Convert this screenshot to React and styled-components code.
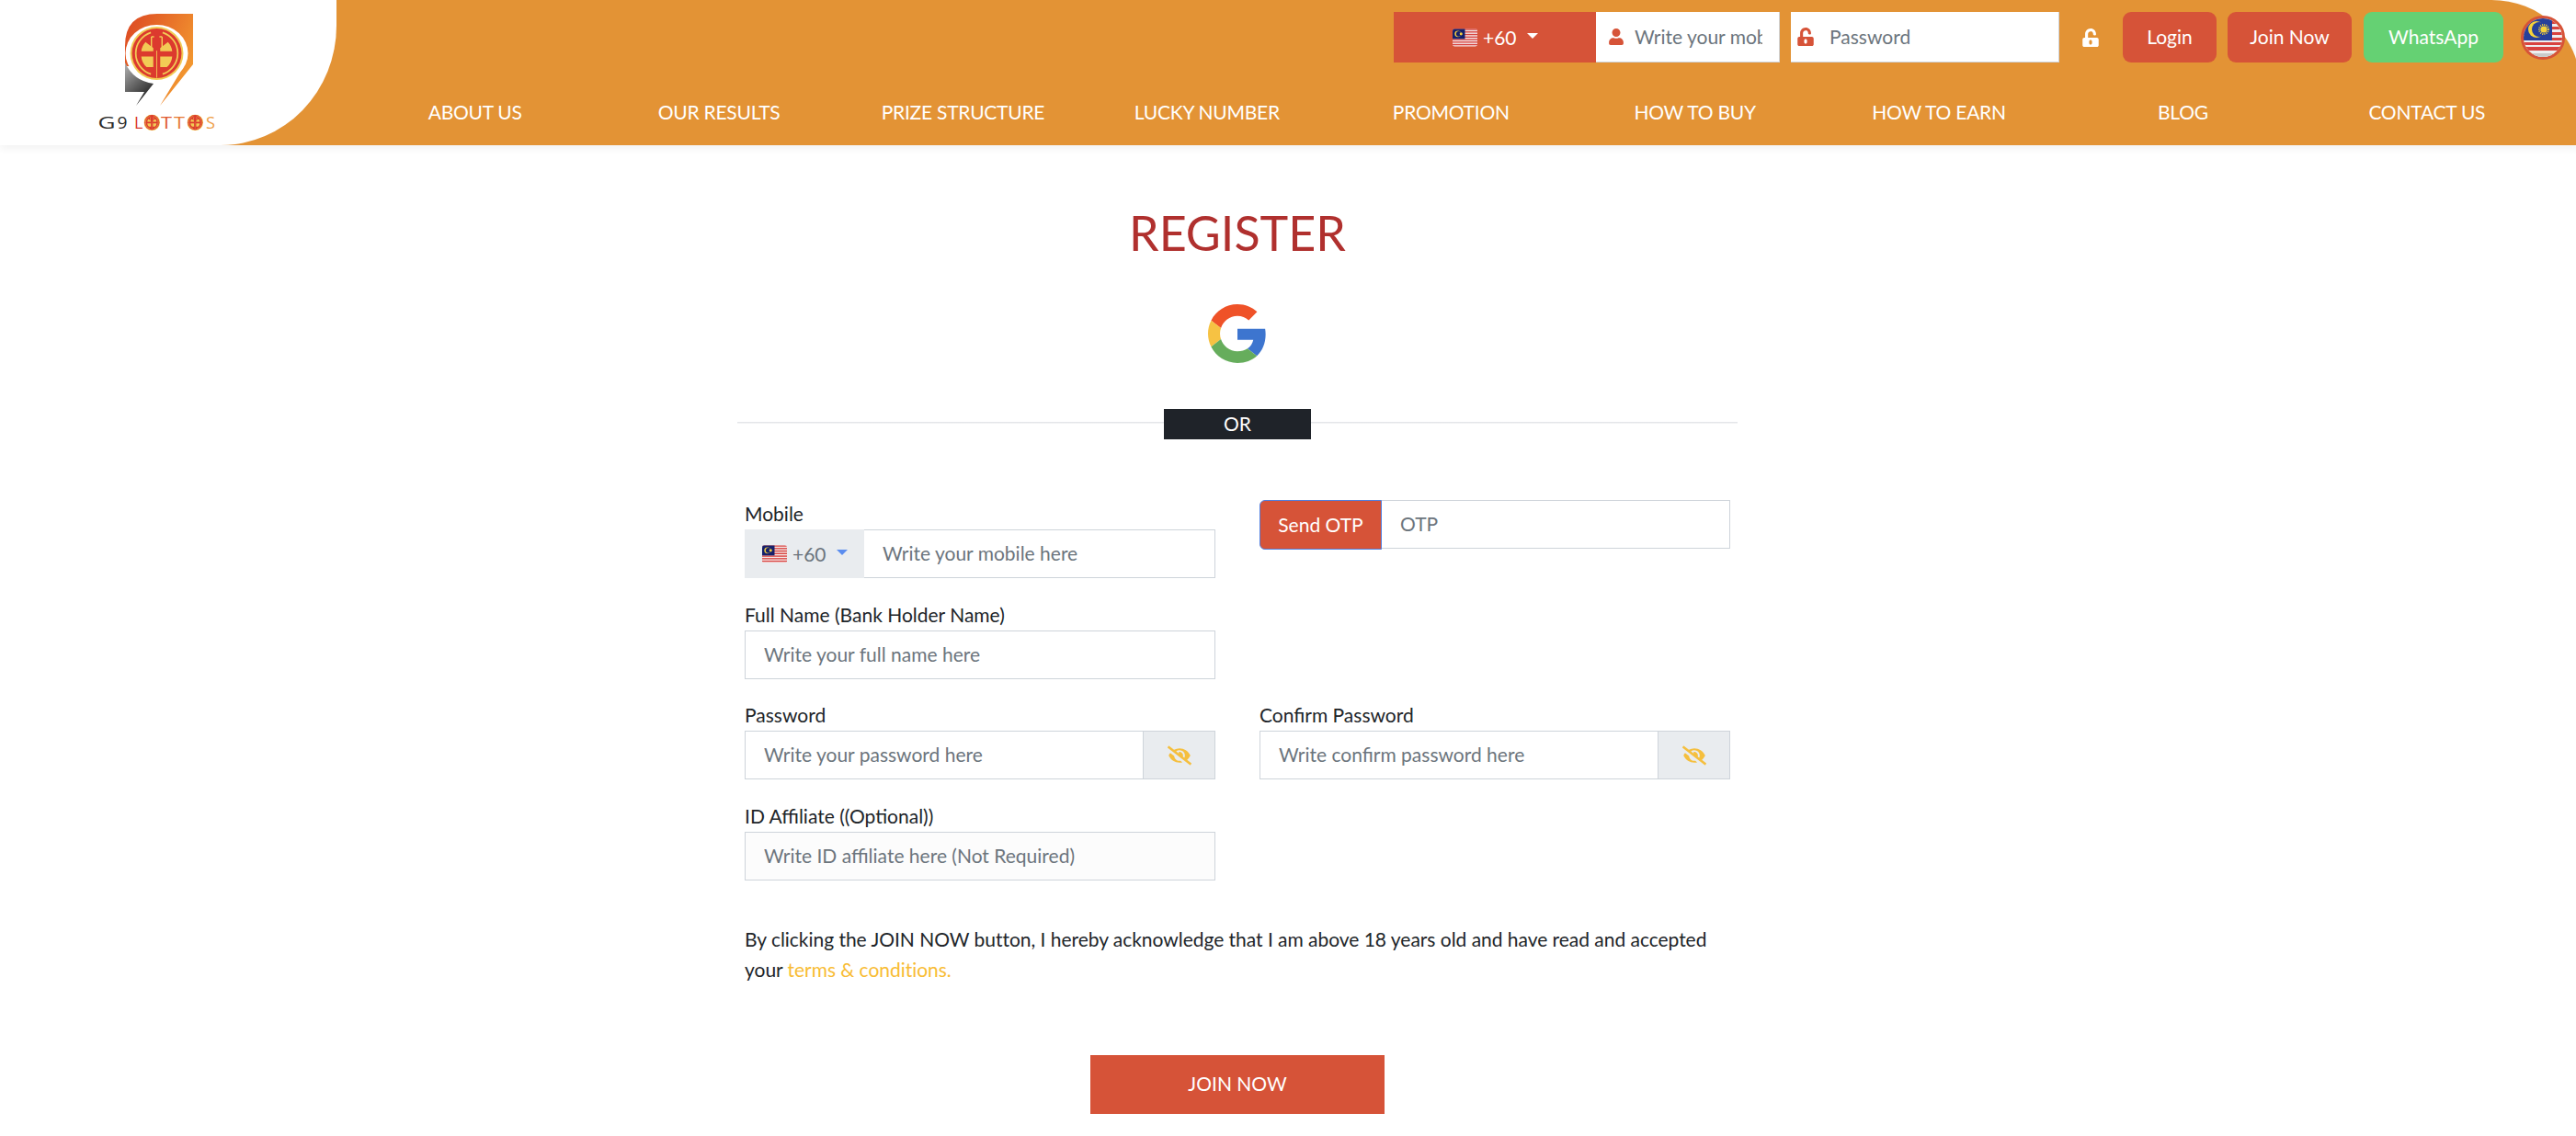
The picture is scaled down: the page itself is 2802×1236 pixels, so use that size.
import React from 'react';
import styled, { createGlobalStyle } from 'styled-components';
import { FaUser, FaUnlockAlt, FaEyeSlash } from 'react-icons/fa';

const FONT = '"Lato", "Noto Sans", "Liberation Sans", sans-serif';

const Global = createGlobalStyle`
  html, body { margin: 0; padding: 0; background: #fff; }
  body { font-family: ${FONT}; color: #212529; overflow: hidden; }
  * { box-sizing: border-box; }
  input::placeholder { color: #6c757d; opacity: 1; }
`;

const Page = styled.div`width: 2802px; height: 1236px; overflow: hidden; background: #fff;`;

const Header = styled.header`
  display: flex;
  width: 2806px;
  height: 158px;
  background: #e39335;
  border-top-right-radius: 96px 90px;
  box-shadow: 0 4px 8px rgba(0,0,0,.05);
`;
const LogoBlock = styled.div`
  width: 366px;
  height: 158px;
  flex: none;
  background: #fff;
  border-bottom-right-radius: 126px 130px;
`;
const HeaderBody = styled.div`flex: 1; display: flex; flex-direction: column; padding-top: 13px;`;
const TopRow = styled.div`
  display: flex;
  align-items: center;
  justify-content: flex-end;
  height: 55px;
  padding-right: 16px;
`;
const PhoneSelect = styled.div`
  width: 220px;
  height: 55px;
  background: #d65338;
  color: #fff;
  font-size: 21px;
  display: flex;
  align-items: center;
  padding-left: 64px;
`;
const Caret = styled.span`
  width: 0; height: 0;
  border-left: 6px solid transparent;
  border-right: 6px solid transparent;
  border-top: 6px solid ${p => p.$color};
  margin-left: ${p => p.$gap}px;
  margin-top: -3px;
`;
const HeadInputWrap = styled.div`
  width: ${p => p.$w}px;
  height: 55px;
  background: #fff;
  border-bottom: 1px solid #ced4da;
  border-right: 1px solid #ced4da;
  display: flex;
  align-items: center;
  margin-right: ${p => p.$mr || 0}px;
  padding-left: ${p => p.$pl}px;
  padding-right: 18px;
  color: #d65338;
  font-size: 20px;
`;
const HeadInput = styled.input`
  flex: 1;
  min-width: 0;
  border: 0;
  outline: 0;
  padding: 0 0 2px;
  margin-left: ${p => p.$ml}px;
  font: 400 21px ${FONT};
  background: transparent;
`;
const UnlockSlot = styled.div`
  color: #fff;
  font-size: 20px;
  display: flex;
  margin-right: 25px;
`;
const HeadButton = styled.button`
  width: ${p => p.$w}px;
  height: 55px;
  margin-right: ${p => p.$mr}px;
  border: 0;
  border-radius: 9px;
  background: ${p => p.$bg};
  color: #fff;
  font: 400 21px ${FONT};
  padding: 0 0 2px;
`;
const RoundFlag = styled.div`
  width: 48px; height: 48px;
  border-radius: 50%;
  border: 3px solid #d65338;
  overflow: hidden;
  flex: none;
  display: flex;
`;
const Nav = styled.nav`
  display: grid;
  grid-template-columns: repeat(9, 265.4px);
  margin-left: 18px;
  margin-top: 40px;
`;
const NavItem = styled.a`
  text-align: center;
  color: #fff;
  font-size: 21px;
  line-height: 27px;
  letter-spacing: -.25px;
`;

const Main = styled.main`
  width: 1088px;
  margin-left: 802px;
  display: flex;
  flex-direction: column;
  align-items: center;
`;
const Title = styled.h1`
  margin: 65px 0 0;
  height: 60px;
  line-height: 60px;
  font-size: 52px;
  font-weight: 400;
  color: #b0302e;
`;
const GoogleBtn = styled.div`margin-top: 48px; height: 64px; display: flex;`;
const Divider = styled.div`
  width: 100%;
  margin-top: 50px;
  height: 33px;
  display: flex;
  justify-content: center;
  background: linear-gradient(#e4e6e9, #e4e6e9) 0 14px / 100% 1.5px no-repeat;
`;
const OrBox = styled.div`
  width: 160px;
  height: 33px;
  background: #1f2329;
  color: #fff;
  font-size: 21px;
  line-height: 31px;
  text-align: center;
`;
const Form = styled.form`
  margin-top: 66px;
  width: 1072px;
  display: grid;
  grid-template-columns: 512px 512px;
  column-gap: 48px;
  row-gap: 24.67px;
`;
const Field = styled.div`display: flex; flex-direction: column;`;
const Label = styled.label`
  height: 32px;
  line-height: 30px;
  font-size: 21px;
`;
const Group = styled.div`
  display: flex;
  height: 53px;
`;
const TextInput = styled.input`
  flex: 1;
  min-width: 0;
  height: 53px;
  border: 1.5px solid #ced4da;
  border-left-width: ${p => p.$noLeft ? 0 : 1.5}px;
  padding: 0 ${p => p.$px || 20}px 2px;
  font: 400 21px ${FONT};
  background: ${p => p.$bg || '#fff'};
  outline: 0;
`;
const CountrySelect = styled.div`
  width: 130px;
  flex: none;
  background: #e9ecef;
  border: 0;
  display: flex;
  align-items: center;
  padding-left: 19px;
  font-size: 21px;
  color: #6c757d;
`;
const FlagSlot = styled.span`display: flex; margin-right: ${p => p.$mr}px;`;
const EyeAddon = styled.div`
  width: 79px;
  flex: none;
  background: #e9ecef;
  border: 1.5px solid #ced4da;
  color: #f5bf3e;
  font-size: 26px;
  display: flex;
  align-items: center;
  justify-content: center;
  margin-left: -1.5px;
`;
const OtpGroup = styled.div`display: flex; align-items: flex-start; height: 54px;`;
const OtpButton = styled.button`
  width: 133px;
  height: 54px;
  flex: none;
  background: #d65338;
  border: 1.5px solid #4f7fe0;
  border-radius: 6px 0 0 6px;
  color: #fff;
  font: 400 21px ${FONT};
  padding: 0 0 2px;
`;
const Agreement = styled.p`
  width: 1072px;
  margin: 47px 0 0;
  font-size: 21px;
  line-height: 33.5px;
  letter-spacing: -.03px;
`;
const TermsLink = styled.a`color: #f8bc34;`;
const JoinButton = styled.button`
  margin-top: 76px;
  width: 320px;
  height: 64px;
  flex: none;
  border: 0;
  background: #d65338;
  color: #fff;
  font: 400 21px ${FONT};
  padding: 0 0 2px;
`;

const Flag = ({ w = 27, h = 20 }) => {
  const stripes = [];
  for (let i = 0; i < 7; i++) stripes.push(<rect key={i} x="0" y={i * 2.86} width="28" height="1.43" fill="#d8433f" />);
  return (
    <svg width={w} height={h} viewBox="0 0 28 20">
      <defs><clipPath id="fl"><rect width="28" height="20" rx="2.5" /></clipPath></defs>
      <g clipPath="url(#fl)">
        <rect width="28" height="20" fill="#f4e9e9" />
        {stripes}
        <rect width="14" height="11.4" fill="#15206b" />
        <circle cx="6" cy="5.7" r="3.6" fill="#f6cf3f" />
        <circle cx="7" cy="5.7" r="3" fill="#15206b" />
        <circle cx="9.6" cy="5.7" r="1.6" fill="#f6cf3f" />
      </g>
    </svg>
  );
};

const BigRoundFlag = () => (
  <svg width="42" height="42" viewBox="0 0 42 42">
    <rect width="42" height="42" fill="#eeeeee" />
    {[3, 9, 15, 21, 26].map(y => <rect key={y} y={y} width="42" height="3" fill="#d8433f" />)}
    <rect y="31" width="42" height="4" fill="#d8433f" />
    <rect y="38" width="42" height="4" fill="#c9c9c9" />
    <rect width="31" height="24" fill="#27409a" />
    <circle cx="14" cy="12" r="9" fill="#f6d23a" />
    <circle cx="17" cy="12" r="8" fill="#27409a" />
    <circle cx="22" cy="12" r="3.6" fill="#f6d23a" />
    <circle cx="22" cy="12" r="5" fill="none" stroke="#f6d23a" strokeWidth="2" strokeDasharray="1 1.1" />
  </svg>
);

const GoogleG = () => (
  <svg width="64" height="64" viewBox="0 0 48 48">
    <path fill="#ef5228" d="M24 9.5c3.54 0 6.71 1.22 9.21 3.6l6.85-6.85C35.9 2.38 30.47 0 24 0 14.62 0 6.51 5.38 2.56 13.22l7.98 6.19C12.43 13.72 17.74 9.5 24 9.5z" />
    <path fill="#3d75cf" d="M46.98 24.55c0-1.57-.15-3.09-.38-4.55H24v9.02h12.94c-.58 2.96-2.26 5.48-4.78 7.18l7.73 6c4.51-4.18 7.09-10.36 7.09-17.65z" />
    <path fill="#f6c243" d="M10.53 28.59c-.48-1.45-.76-2.99-.76-4.59s.27-3.14.76-4.59l-7.98-6.19C.92 16.46 0 20.12 0 24c0 3.88.92 7.54 2.56 10.78l7.97-6.19z" />
    <path fill="#66ad5c" d="M24 48c6.48 0 11.93-2.13 15.89-5.81l-7.73-6c-2.15 1.45-4.92 2.3-8.16 2.3-6.26 0-11.57-4.22-13.47-9.91l-7.98 6.19C6.51 42.62 14.62 48 24 48z" />
  </svg>
);

const Logo = () => (
  <svg width="366" height="158" viewBox="0 0 366 158">
    <defs>
      <linearGradient id="lo" x1="0" y1="0" x2="1" y2="0.6">
        <stop offset="0" stopColor="#dc4622" />
        <stop offset="1" stopColor="#f39a30" />
      </linearGradient>
      <linearGradient id="lb" x1="0" y1="0" x2="0.6" y2="1">
        <stop offset="0" stopColor="#b5b5b5" />
        <stop offset="1" stopColor="#1c1c1c" />
      </linearGradient>
      <symbol id="med" viewBox="-1 -1 2 2">
        <circle r="1" fill="#f2cb55" />
        <circle r=".93" fill="#dc3a2e" />
        <path d="M-.22 -.78 A.82 .82 0 0 0 -.22 .78 M.22 -.78 A.82 .82 0 0 1 .22 .78" fill="none" stroke="#f2cb55" strokeWidth=".06" />
        <path d="M-.2 -.62 V-.2 M.2 -.62 V-.2 M-.2 -.62 H-.1 M.2 -.62 H.1" fill="none" stroke="#f2cb55" strokeWidth=".05" />
        <path d="M-.13 -.08 H-.58 A.6 .6 0 0 1 -.42 -.42 L-.13 -.2Z M.13 -.08 H.58 A.6 .6 0 0 0 .42 -.42 L.13 -.2Z M-.13 .12 H-.58 A.6 .6 0 0 0 -.38 .52 L-.13 .52Z M.13 .12 H.58 A.6 .6 0 0 1 .38 .52 L.13 .52Z" fill="#f2cb55" />
        <path d="M0 -.1 V.92" stroke="#f2cb55" strokeWidth=".03" />
      </symbol>
    </defs>
    <path d="M136 72 V50 Q136 15 171 15 H210 V70 L174 115 L200 72 Z" fill="url(#lo)" />
    <path d="M136 68 V100 H157 L148 115 L167 91 Q145 88 136 68 Z" fill="url(#lb)" />
    <ellipse cx="170.5" cy="58" rx="34" ry="31" fill="#fff" />
    <use href="#med" x="139.5" y="29" width="62" height="58" />
    <g fontFamily={'"Open Sans", sans-serif'} fontSize="18" fontWeight="400">
      <text x="106.5" y="139.5" fill="#2a2a2a" textLength="19" lengthAdjust="spacingAndGlyphs">G</text>
      <text x="127.5" y="139.5" fill="#2a2a2a" textLength="11" lengthAdjust="spacingAndGlyphs">9</text>
      <text x="146" y="139.5" fill="#d9392c">L</text>
      <text x="175" y="139.5" fill="#df5a2e" textLength="12" lengthAdjust="spacingAndGlyphs">T</text>
      <text x="189" y="139.5" fill="#e67a32" textLength="12" lengthAdjust="spacingAndGlyphs">T</text>
      <text x="224" y="139.5" fill="#ee9e48" textLength="10" lengthAdjust="spacingAndGlyphs">S</text>
    </g>
    <use href="#med" x="156.5" y="124.5" width="17.5" height="17.5" />
    <use href="#med" x="203.5" y="124.5" width="17.5" height="17.5" />
  </svg>
);

const NAV = ['ABOUT US', 'OUR RESULTS', 'PRIZE STRUCTURE', 'LUCKY NUMBER', 'PROMOTION', 'HOW TO BUY', 'HOW TO EARN', 'BLOG', 'CONTACT US'];

export default function App() {
  return (
    <Page>
      <Global />
      <Header>
        <LogoBlock><Logo /></LogoBlock>
        <HeaderBody>
          <TopRow>
            <PhoneSelect>
              <FlagSlot $mr={6}><Flag /></FlagSlot>
              +60
              <Caret $color="#fff" $gap={11} />
            </PhoneSelect>
            <HeadInputWrap $w={200} $pl={13} $mr={12}>
              <FaUser size={18} />
              <HeadInput $ml={11} placeholder="Write your mobile here" />
            </HeadInputWrap>
            <HeadInputWrap $w={292} $pl={6} $mr={24}>
              <FaUnlockAlt size={20} />
              <HeadInput $ml={16} placeholder="Password" />
            </HeadInputWrap>
            <UnlockSlot><FaUnlockAlt /></UnlockSlot>
            <HeadButton $w={102} $mr={12} $bg="#d65338">Login</HeadButton>
            <HeadButton $w={135} $mr={13} $bg="#d65338">Join Now</HeadButton>
            <HeadButton $w={152} $mr={19} $bg="#65d173">WhatsApp</HeadButton>
            <RoundFlag><BigRoundFlag /></RoundFlag>
          </TopRow>
          <Nav>
            {NAV.map(n => <NavItem key={n}>{n}</NavItem>)}
          </Nav>
        </HeaderBody>
      </Header>
      <Main>
        <Title>REGISTER</Title>
        <GoogleBtn><GoogleG /></GoogleBtn>
        <Divider><OrBox>OR</OrBox></Divider>
        <Form>
          <Field>
            <Label>Mobile</Label>
            <Group>
              <CountrySelect>
                <FlagSlot $mr={6}><Flag /></FlagSlot>
                +60
                <Caret $color="#5b8def" $gap={11} />
              </CountrySelect>
              <TextInput $noLeft placeholder="Write your mobile here" />
            </Group>
          </Field>
          <OtpGroup>
            <OtpButton type="button">Send OTP</OtpButton>
            <TextInput $noLeft placeholder="OTP" />
          </OtpGroup>
          <Field>
            <Label>Full Name (Bank Holder Name)</Label>
            <Group><TextInput placeholder="Write your full name here" /></Group>
          </Field>
          <div />
          <Field>
            <Label>Password</Label>
            <Group>
              <TextInput placeholder="Write your password here" />
              <EyeAddon><FaEyeSlash /></EyeAddon>
            </Group>
          </Field>
          <Field>
            <Label>Confirm Password</Label>
            <Group>
              <TextInput placeholder="Write confirm password here" />
              <EyeAddon><FaEyeSlash /></EyeAddon>
            </Group>
          </Field>
          <Field>
            <Label>ID Affiliate ((Optional))</Label>
            <Group><TextInput $bg="#fcfcfc" placeholder="Write ID affiliate here (Not Required)" /></Group>
          </Field>
        </Form>
        <Agreement>
          By clicking the JOIN NOW button, I hereby acknowledge that I am above 18 years old and have read and accepted your <TermsLink>terms &amp; conditions.</TermsLink>
        </Agreement>
        <JoinButton type="button">JOIN NOW</JoinButton>
      </Main>
    </Page>
  );
}
